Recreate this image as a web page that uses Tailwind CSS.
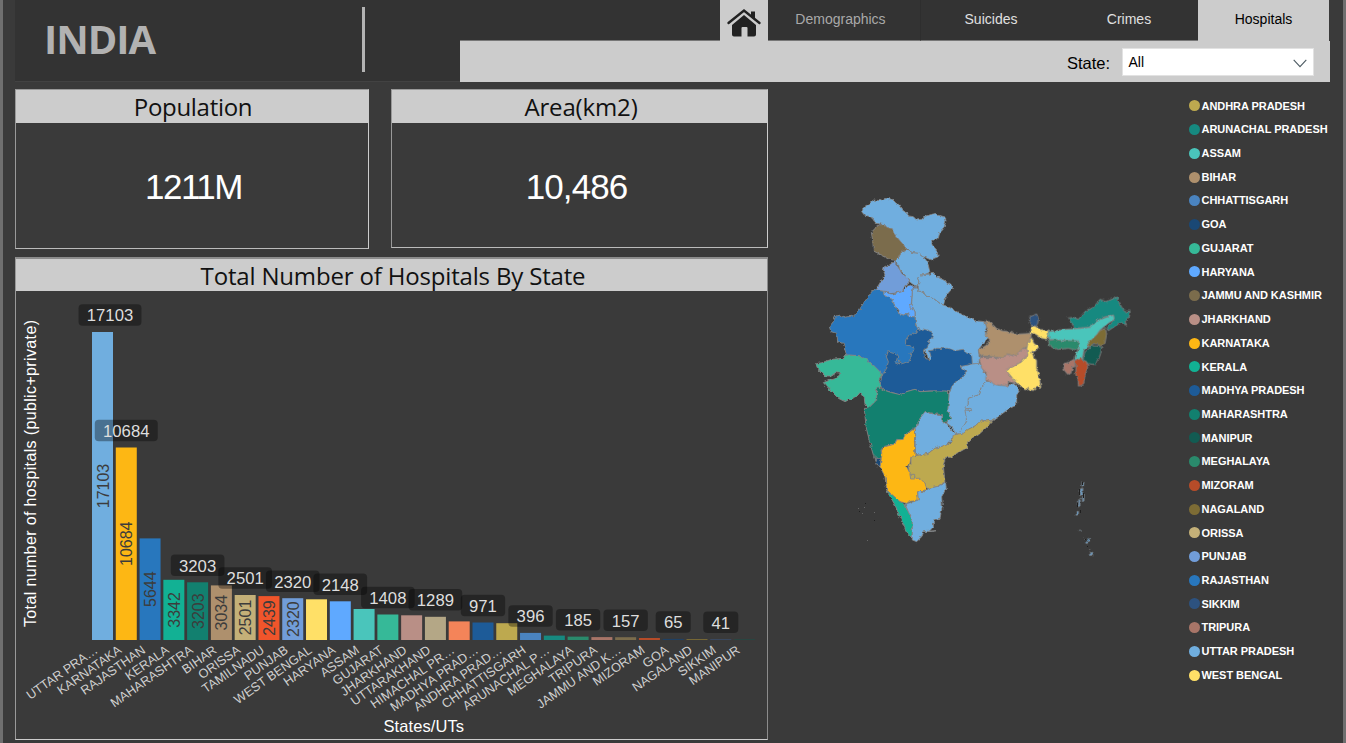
<!DOCTYPE html>
<html lang="en">
<head>
<meta charset="utf-8">
<title>India - Hospitals</title>
<script src="https://cdn.jsdelivr.net/npm/@tailwindcss/browser@4"></script>
</head>
<body class="bg-[#3a3a3a] overflow-hidden">
<div class="flex h-[743px] w-[1346px] flex-col overflow-hidden border-x-[3px] border-[#6f6f6f] bg-[#3a3a3a] pl-3 font-['Liberation_Sans',sans-serif]">
  <header class="flex h-[82px] w-[1315px] shrink-0">
    <div class="flex w-[445px] border-b border-[#424242] bg-[#333333]">
      <h1 class="w-[347px] pl-[29px] pt-[9px] font-['Open_Sans',sans-serif] text-[40px] leading-[60px] font-bold tracking-[-1px] text-[#b2b2b2]">INDIA</h1>
      <div class="mt-[7px] h-[65px] w-[3px] bg-[#b3b3b3]"></div>
    </div>
    <div class="flex w-[870px] flex-col">
      <nav class="flex h-[41px] bg-[#333333] text-sm text-[#e0e0e0]">
        <div class="w-[260px] border-b border-[#777]"></div>
        <a class="flex w-[48px] justify-center bg-[#cccccc] pt-2">
          <svg width="36" height="30" viewBox="0 0 36 30"><path d="M25 3.500h4v9l-4-4z" fill="#222"/><path d="M2.500 15 18 2.500l15.500 12.500" fill="none" stroke="#222" stroke-width="2.400" stroke-linecap="round"/><path d="M6 17 18 7l12 10V26.500q0 2-2 2h-6.500v-8.500q0-1-1-1h-4q-1 0-1 1V28.500H8q-2 0-2-2z" fill="#222"/></svg>
        </a>
        <a class="flex w-[153px] justify-center border-r border-b border-r-[#2e2e2e] border-b-[#777] pr-[7px] leading-[38px] text-[#a9a9a9]">Demographics</a>
        <a class="flex w-[139px] justify-center border-b border-[#777] pl-px leading-[38px]">Suicides</a>
        <a class="flex w-[138px] justify-center border-b border-[#777] leading-[38px]">Crimes</a>
        <a class="flex w-[131px] justify-center bg-[#cccccc] leading-[38px] text-black">Hospitals</a>
        <div class="w-px bg-[#3a3a3a]"></div>
      </nav>
      <div class="flex h-[41px] items-center justify-end bg-[#cccccc] pr-4">
        <label class="mr-3 pt-[3px] text-[16.500px] text-black">State:</label>
        <div class="flex h-7 w-[192px] items-center justify-between border border-[#e2e2e2] bg-white pr-[6px] pl-[5.500px] text-sm text-black"><span>All</span>
          <svg class="mt-[3px]" width="14" height="9" viewBox="0 0 14 9"><path d="M.7.9 7 7.600 13.300.9" fill="none" stroke="#4d5b63" stroke-width="1.100"/></svg>
        </div>
      </div>
    </div>
  </header>

  <main class="flex min-h-0 flex-1 pt-[7px]">
    <section class="flex w-[754px] shrink-0 flex-col">
      <div class="flex gap-[22px]">
        <div class="flex h-[160px] w-[354px] flex-col border border-t-[#999] border-r-[#ccc] border-b-[#bbb] border-l-[#999]">
          <h2 class="h-[33px] bg-[#cccccc] pl-[2px] text-center font-['Open_Sans',sans-serif] text-[24px] leading-[34px] font-normal tracking-[-.300px] text-[#111]">Population</h2>
          <p class="pt-[43px] pl-[3px] text-center text-[35px] leading-[42px] tracking-[-1.500px] text-white">1211M</p>
        </div>
        <div class="flex h-[159px] w-[377px] flex-col border border-t-[#999] border-r-[#ccc] border-b-[#bbb] border-l-[#999]">
          <h2 class="h-[33px] bg-[#cccccc] pl-[3px] text-center font-['Open_Sans',sans-serif] text-[24px] leading-[34px] font-normal tracking-[-.150px] text-[#111]">Area(km2)</h2>
          <p class="pt-[43px] pr-[6px] text-center text-[35px] leading-[42px] tracking-[-.900px] text-white">10,486</p>
        </div>
      </div>
      <div class="mt-2 flex h-[483px] w-[753px] flex-col border border-t-2 border-t-[#8c8c8c] border-r-[#8c8c8c] border-b-[#ccc] border-l-[#999]">
        <h2 class="h-8 shrink-0 bg-[#cccccc] pl-[3px] text-center font-['Open_Sans',sans-serif] text-[24px] leading-[34px] font-normal tracking-[-.170px] text-[#111]">Total Number of Hospitals By State</h2>
        <svg id="chart" width="752" height="448" viewBox="16 291 752 448" class="shrink-0 font-['Liberation_Sans',sans-serif]">
          <text transform="translate(36 627) rotate(-90)" font-size="16" fill="#fff" textLength="307">Total number of hospitals (public+private)</text>
          <text x="383.500" y="732" font-size="16.500" fill="#fff" textLength="80.500">States/UTs</text>
        </svg>
      </div>
    </section>

    <svg class="shrink-0" width="414" height="640" viewBox="769 89 414 640">
      <defs>
        <filter id="coast" filterUnits="userSpaceOnUse" x="790" y="180" width="380" height="400" color-interpolation-filters="sRGB">
          <feTurbulence type="fractalNoise" baseFrequency="0.28" numOctaves="2" seed="4" result="n"/>
          <feDisplacementMap in="SourceGraphic" in2="n" scale="3.500" xChannelSelector="R" yChannelSelector="G"/>
        </filter>
      </defs>
      <g filter="url(#coast)">
      <g transform="translate(805 190) scale(.33333)" stroke="#858585" stroke-width="2.600" stroke-linejoin="round">
        <g fill="#70aedf">
          <path stroke="none" d="M430 640 560 570 540 688 490 715 455 735 430 700z"/>
          <path d="M170 65 178 50 195 40 205 30 225 32 245 25 262 28 272 38 280 42 290 58 305 70 312 78 325 80 335 90 350 88 362 78 385 72 392 70 400 76 420 82 423 92 418 110 405 125 400 145 380 152 382 165 395 180 400 200 388 205 378 210 360 202 352 200 340 190 322 188 310 180 290 160 270 135 262 120 245 112 235 103 210 100 205 85 195 80 178 75z"/>
          <path d="M306 180 322 188 340 190 352 200 362 208 370 225 375 248 360 255 345 255 338 265 342 275 335 290 322 282 310 272 300 255 285 240 280 225 270 215 282 200 290 185z"/>
          <path d="M335 290 342 302 360 310 370 322 385 325 405 340 415 345 430 350 450 362 480 378 510 392 540 395 545 410 540 425 548 445 535 460 520 480 524 505 522 522 500 522 400 500 372 510 340 430 332 400 330 365 320 345 322 300z"/>
          <path d="M345 255 375 252 385 250 395 260 420 272 430 280 445 292 425 315 420 330 415 345 405 340 385 325 370 322 360 310 342 302 338 285 342 275 338 265z"/>
          <path d="M480 525 500 522 525 520 535 540 548 560 545 575 530 590 520 615 490 625 490 655 485 690 478 715 460 735 440 710 425 700 432 680 428 660 432 610 440 590 455 572 475 560 485 545 465 530z"/>
          <path d="M545 575 562 573 580 585 610 585 630 580 645 600 635 615 635 645 615 655 600 665 580 680 565 690 545 693 530 690 510 708 490 718 475 735 460 735 470 715 485 695 480 660 500 662 498 655 478 656 490 640 490 625 520 615 530 590z"/>
        </g>
        <path fill="#7b6c4c" d="M222 105 238 103 245 112 262 116 270 135 290 158 306 178 290 185 282 200 272 212 255 208 240 200 205 183 203 150 199 128 205 120z"/>
        <path fill="#2877bd" d="M205 298 215 300 235 303 240 318 262 328 270 350 282 370 295 375 310 370 315 380 330 380 332 405 340 418 345 440 340 500 300 560 232 555 222 550 210 540 200 525 180 508 160 497 125 495 120 480 115 460 98 455 95 430 78 425 73 410 85 395 92 378 105 375 115 382 145 378 160 365 175 340 190 320z"/>
        <path fill="#5fa9ff" d="M312 283 325 290 335 288 322 300 320 330 318 345 330 365 330 380 315 380 310 368 295 375 280 370 282 360 270 350 262 328 240 318 235 305 262 312 290 305 300 298z"/>
        <path fill="#5fa9ff" d="M315 347l6-2 3 12-8-1z"/>
        <path fill="#719dd9" d="M268 213 275 225 285 240 290 250 305 262 310 270 312 280 300 290 290 305 262 310 245 305 215 300 218 290 230 270 240 255 235 240 238 230 258 222z"/>
        <path fill="#1d5b98" d="M302 450 310 438 340 422 355 417 380 425 382 440 372 455 368 470 355 480 358 500 372 510 378 500 373 482 385 480 395 475 430 475 450 482 475 478 485 490 500 492 502 520 490 525 465 530 485 545 475 560 455 572 440 590 435 605 395 603 370 603 345 605 330 598 305 605 290 618 270 610 235 600 225 585 230 560 235 550 245 535 250 515 244 500 248 485 265 490 275 495 280 490 278 500 272 520 285 525 280 510 295 520 320 510 315 490 330 480 325 470 302 465z"/>
        <g transform="translate(0 450)">
          <path fill="#36b998" d="M32 72 50 68 80 58 115 55 122 45 160 47 185 58 205 75 225 95 232 105 222 120 228 140 215 150 215 180 200 195 190 205 180 195 178 175 165 158 155 170 135 178 120 185 100 175 80 155 55 128 70 122 95 115 107 100 95 98 80 108 60 108 50 98 38 85z"/>
          <path fill="#12806f" d="M178 205 190 205 200 195 215 180 215 150 220 140 235 150 260 158 290 165 305 155 330 148 345 155 395 153 425 153 432 165 430 190 428 210 438 235 425 245 412 248 412 225 385 220 360 215 355 230 340 245 338 260 325 265 300 285 295 300 275 298 270 312 235 320 228 330 230 350 215 355 205 345 195 310 183 260z"/>
          <path fill="#1a4875" d="M210 355h18v25l-10-2z"/>
          <path fill="#70aedf" d="M360 215 385 222 412 228 412 248 425 250 435 265 452 285 440 300 425 315 390 325 370 340 345 345 332 345 330 310 332 285 330 265 338 255 345 235z"/>
          <path fill="#bda94f" d="M565 240 545 262 520 285 488 305 488 322 465 335 445 345 440 352 422 352 415 375 420 430 395 440 372 445 365 445 360 430 345 418 330 420 315 410 312 395 310 378 318 370 318 348 345 345 370 340 390 325 425 315 440 305 445 285 475 280 490 268 510 258 530 240 545 243z"/>
          <path fill="#fdb714" d="M330 265 332 285 328 300 330 345 318 350 315 370 305 380 315 400 318 415 345 415 360 430 365 445 358 455 338 455 340 480 315 485 305 490 285 485 262 465 245 450 240 410 225 380 230 350 230 330 240 320 270 312 275 300 295 298 300 285z"/>
          <path fill="#12b194" d="M245 452 262 465 285 485 300 495 310 515 322 540 322 598 305 580 298 560 270 495z"/>
          <path fill="#70aedf" d="M300 492 320 487 340 480 338 455 360 455 372 445 395 440 422 430 424 445 410 470 412 500 405 535 385 540 385 560 372 575 395 572 355 575 350 590 335 605 322 600 322 540 310 515z"/>
          <path fill="#bda94f" d="M315 403h14v14h-12z"/>
        </g>
        <g transform="translate(480 270)">
          <path fill="#ae906d" d="M60 125 75 125 85 140 110 152 130 155 160 162 200 160 195 180 190 200 175 205 160 220 150 228 125 222 115 235 80 230 45 228 40 210 65 195 75 180 60 165 68 150z"/>
          <path fill="#b98f86" d="M42 232 80 232 115 235 125 222 150 228 160 218 175 205 188 205 188 225 170 245 140 262 125 270 130 280 155 310 130 305 128 318 95 315 75 305 62 300 65 280 50 265 45 245z"/>
          <path fill="#ffe067" d="M195 145 205 135 225 148 250 152 252 165 245 178 230 175 215 165 205 160 195 160z"/>
          <path fill="#ffe067" d="M190 185 200 172 207 190 222 200 212 213 200 215 208 235 215 240 215 265 222 285 228 322 215 322 205 332 195 330 190 325 180 330 165 318 150 305 135 285 122 270 140 262 170 245 188 225 185 205z"/>
          <path fill="#2d527f" d="M195 110 215 102 220 115 218 130 215 138 200 137 193 130z"/>
          <path fill="#168980" d="M308 115 325 112 340 118 360 95 385 82 405 58 425 65 440 58 455 52 465 70 470 85 480 95 495 93 493 110 480 125 485 135 470 128 455 135 430 152 425 145 448 120 445 105 415 112 390 125 375 142 325 145 322 130z"/>
          <path fill="#4ac5bb" d="M250 155 300 148 345 145 375 142 390 125 415 115 445 105 448 118 430 130 405 150 395 165 370 190 370 200 357 210 352 235 328 240 332 225 342 205 340 185 290 182 252 178z"/>
          <path fill="#2a8a6c" d="M250 182 270 178 290 182 340 182 342 205 335 210 310 205 280 208 255 200z"/>
          <path fill="#7d6c35" d="M420 145 425 160 420 190 405 195 385 192 370 200 368 190 395 165 405 152z"/>
          <path fill="#125b52" d="M375 195 390 198 410 200 407 220 400 240 390 254 365 250 353 242 360 215 370 208z"/>
          <path fill="#b64c29" d="M345 235 365 245 368 265 360 285 355 315 340 318 340 300 332 285 333 255 330 243z"/>
          <path fill="#a87568" d="M328 237 330 260 322 262 318 280 308 283 297 270 295 252 310 248z"/>
        </g>
        <g transform="translate(735 840)" fill="#6b9cc4" stroke="#777" stroke-width="2">
          <path d="M96 34 102 36 100 50 95 52zM91 56 99 55 98 72 90 78zM98 78 103 76 102 90 97 94zM86 88 91 86 90 108 85 112zM79 124 86 124 85 136 78 136zM89 179h4v6h-4zM98 204l6 6M118 202v14l-6-2v8l-6-3M118 239l6-1M121 246 129 248 128 258 122 256z"/>
        </g>
      </g>
      </g>
      <g fill="#1e1e1e"><path d="M1082 482h1v3h-1zM1079 489h1v6h-1zM1083 493h1v5h-1zM1077 503h1v4h-1zM1080 510h1v3h-1zM1085 539h1v1h-1zM1087 546h1v1h-1zM874 520h1v1h-1zM859 511h1v1h-1zM865 503h1v1h-1z"/></g>
      <g fill="#666"><path d="M858 508h1v1h-1zM864 507h1v1h-1zM862 513h1v1h-1zM874 512h1v1h-1zM867 540h1v1h-1z"/></g>
    </svg>

    <ul id="legend" class="flex w-[150px] shrink-0 flex-col pt-[5px] pl-[6px] text-[11px] font-bold text-white"></ul>
  </main>
</div>

<script>
const legend = [["ANDHRA PRADESH","#bda94f"],["ARUNACHAL PRADESH","#168980"],["ASSAM","#4ac5bb"],["BIHAR","#ae906d"],["CHHATTISGARH","#4a83bf"],["GOA","#1a4875"],["GUJARAT","#36b998"],["HARYANA","#5fa9ff"],["JAMMU AND KASHMIR","#7b6c4c"],["JHARKHAND","#b98f86"],["KARNATAKA","#fdb714"],["KERALA","#12b194"],["MADHYA PRADESH","#1d5b98"],["MAHARASHTRA","#12806f"],["MANIPUR","#125b52"],["MEGHALAYA","#2a8a6c"],["MIZORAM","#b64c29"],["NAGALAND","#7d6c35"],["ORISSA","#c4b078"],["PUNJAB","#719dd9"],["RAJASTHAN","#2877bd"],["SIKKIM","#2d527f"],["TRIPURA","#a87568"],["UTTAR PRADESH","#70aedf"],["WEST BENGAL","#ffe067"]];
document.getElementById("legend").innerHTML = legend.map(([n,c]) => `<li class="flex h-[23.720px] shrink-0 items-center gap-[1.500px] whitespace-nowrap tracking-[-.050px]"><i class="h-[11px] w-[11px] rounded-full" style="background:${c}"></i>${n}</li>`).join("");

// [label, bar height in px, colour, value inside the bar, value in the pill]
const bars = [
["UTTAR PRA…",308,"#70aedf",17103,17103],["KARNATAKA",192.5,"#fdb714",10684,10684],["RAJASTHAN",101.6,"#2877bd",5644],["KERALA",60.2,"#12b194",3342],["MAHARASHTRA",57.7,"#12806f",3203,3203],["BIHAR",54.6,"#ae906d",3034],["ORISSA",45,"#c4b078",2501,2501],["TAMILNADU",43.9,"#f0552b",2439],["PUNJAB",41.8,"#719dd9",2320,2320],["WEST BENGAL",40.7,"#ffe067"],["HARYANA",38.7,"#5fa9ff",0,2148],["ASSAM",31,"#4ac5bb"],["GUJARAT",25.5,"#36b998",0,1408],["JHARKHAND",24.7,"#b98f86"],["UTTARAKHAND",23.2,"#b4a786",0,1289],["HIMACHAL PR…",18.6,"#f48459"],["MADHYA PRAD…",17.5,"#1d5b98",0,971],["ANDHRA PRAD…",16.8,"#bda94f"],["CHHATTISGARH",7.1,"#4a83bf",0,396],["ARUNACHAL P…",4.4,"#168980"],["MEGHALAYA",3.4,"#2a8a6c",0,185],["TRIPURA",2.9,"#a87568"],["JAMMU AND K…",2.8,"#7b6c4c",0,157],["MIZORAM",2,"#b64c29"],["GOA",1.1,"#1f4063",0,65],["NAGALAND",.9,"#7d6c35"],["SIKKIM",.7,"#3a4f70",0,41],["MANIPUR",.6,"#1f4d47"]];
let under = "", over = "";
bars.forEach(([name,h,color,inner,pill],i) => {
  const cx = 102.5 + i*23.78, top = 640 - h;
  under += `<rect x="${cx-10.5}" y="${top}" width="21" height="${h}" fill="${color}"/>`;
  if (inner) under += `<text transform="translate(${cx+6} ${640-h/2}) rotate(-90)" text-anchor="middle" font-size="16" fill="#3c3c3c">${inner}</text>`;
  under += `<text transform="translate(${cx-3.8} 652) rotate(-35)" text-anchor="end" font-size="12.700" fill="#cfcfcf">${name}</text>`;
  if (pill) {
    const px = i ? cx : 110, w = String(pill).length*9.3 + 16.5, y = top - 27.7;
    over += `<rect x="${px-w/2}" y="${y}" width="${w}" height="21.500" rx="4" fill="#000" fill-opacity=".35"/><text x="${px}" y="${y+17}" text-anchor="middle" font-size="16.700" fill="#dedede">${pill}</text>`;
  }
});
document.getElementById("chart").insertAdjacentHTML("beforeend", under + over);
</script>
</body>
</html>
